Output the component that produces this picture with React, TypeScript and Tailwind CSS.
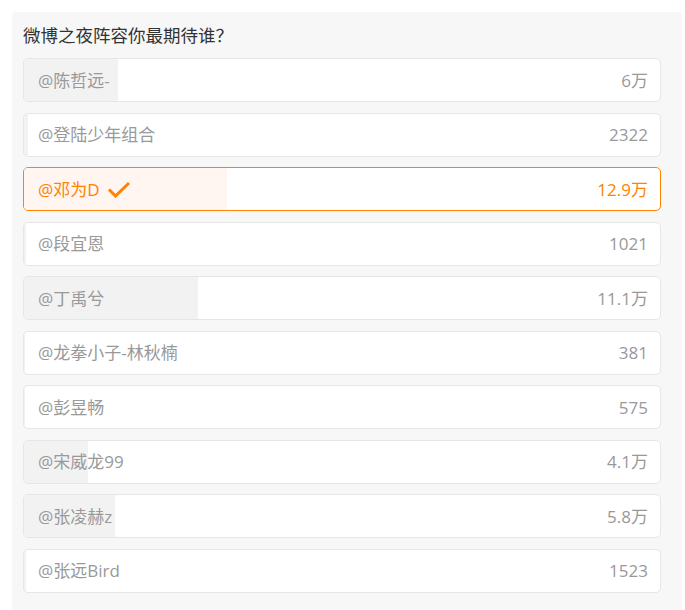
const options = [
  { name: '@陈哲远-', label: '6万', votes: 60000 },
  { name: '@登陆少年组合', label: '2322', votes: 2322 },
  { name: '@邓为D', label: '12.9万', votes: 129000, picked: true },
  { name: '@段宜恩', label: '1021', votes: 1021 },
  { name: '@丁禹兮', label: '11.1万', votes: 111000 },
  { name: '@龙拳小子-林秋楠', label: '381', votes: 381 },
  { name: '@彭昱畅', label: '575', votes: 575 },
  { name: '@宋威龙99', label: '4.1万', votes: 41000 },
  { name: '@张凌赫z', label: '5.8万', votes: 58000 },
  { name: '@张远Bird', label: '1523', votes: 1523 },
];

const total = options.reduce((s, o) => s + o.votes, 0);

function Check() {
  return (
    <svg width="24" height="17" viewBox="0 0 24 17" fill="none" className="ml-[7px]">
      <polyline points="2,8.5 8.5,15 22,2" stroke="#ff8200" strokeWidth="3" strokeLinejoin="miter" />
    </svg>
  );
}

export default function App() {
  return (
    <div className="w-[685px] h-[610px] bg-white pt-[12px] pl-[12px] overflow-hidden" style={{ fontFamily: '"Open Sans", "Noto Sans CJK SC", sans-serif' }}>
      <div className="w-[670px] h-[620px] bg-[#f7f7f7] rounded-[4px] pl-[11px] pr-[21px] pt-[11px]">
        <div className="h-[24px] leading-[24px] text-[17.5px] text-[#333] mb-[11px] font-['Noto_Sans_CJK_SC',sans-serif]">微博之夜阵容你最期待谁？</div>
        <div className="flex flex-col gap-[10.5px]">
          {options.map((o) => (
            <div
              key={o.name}
              className={`relative h-[44px] rounded-[5px] border bg-white overflow-hidden ${o.picked ? 'border-[#ff8200]' : 'border-[#e6e6e6]'}`}
            >
              <div
                className={`absolute inset-y-0 left-0 ${o.picked ? 'bg-[#fff5f1]' : 'bg-[#f2f2f2]'}`}
                style={{ width: `${(o.votes / total) * 100}%` }}
              />
              <div className={`relative flex items-center justify-between h-full pl-[14px] pr-[12px] pt-[1px] text-[17px] ${o.picked ? 'text-[#ff8200]' : 'text-[#999]'}`}>
                <div className="flex items-center">
                  <span>{o.name}</span>
                  {o.picked && <Check />}
                </div>
                <span>{o.label}</span>
              </div>
            </div>
          ))}
        </div>
      </div>
    </div>
  );
}
